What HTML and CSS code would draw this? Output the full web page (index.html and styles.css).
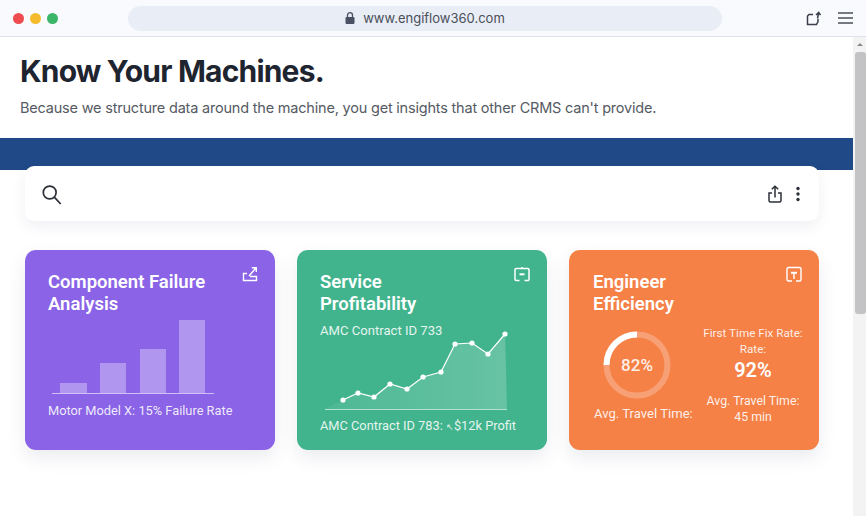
FILE: index.html
```html
<!DOCTYPE html>
<html lang="en">
<head>
  <meta charset="UTF-8">
  <meta name="viewport" content="width=device-width, initial-scale=1.0">
  <title>Know Your Machines</title>
  <link rel="stylesheet" href="styles.css">
</head>
<body>
  <header class="toolbar">
    <div class="dots">
      <span class="dot dot-red"></span>
      <span class="dot dot-yellow"></span>
      <span class="dot dot-green"></span>
    </div>
    <div class="url-bar">
      <svg class="lock" width="10" height="12" viewBox="0 0 10 12">
        <path d="M2.500 5V3.200a2.500 2.500 0 0 1 5 0V5" fill="none" stroke="#4a5162" stroke-width="1.300"/>
        <rect x="0.500" y="5" width="9" height="7" rx="1.200" fill="#4a5162"/>
      </svg>
      <span>www.engiflow360.com</span>
    </div>
    <div class="toolbar-icons">
      <svg width="15" height="15" viewBox="0 0 15 15" fill="none" stroke="#3a3f4a" stroke-width="1.500">
        <path d="M7 3.500H3L1.500 5v8.500h9l1.500-3V8"/>
        <path d="M11.500 7.500l1-5M10 4l2.700-2.500L14.500 4"/>
      </svg>
      <svg width="15" height="12" viewBox="0 0 15 12" stroke="#4a4f5a" stroke-width="1.400">
        <path d="M0 1h15M0 6h15M0 11h15"/>
      </svg>
    </div>
  </header>

  <div class="viewport">
    <main class="page">
      <section class="hero">
        <h1>Know Your Machines.</h1>
        <p>Because we structure data around the machine, you get insights that other CRMS can't provide.</p>
      </section>

      <div class="band"></div>

      <div class="search-card">
        <svg width="22" height="22" viewBox="0 0 22 22" fill="none" stroke="#2b2f38" stroke-width="1.700">
          <circle cx="7.700" cy="9.500" r="6.400"/>
          <path d="M12.300 14.100L18.700 21"/>
        </svg>
        <div class="search-actions">
          <svg width="14" height="18" viewBox="0 0 14 18" fill="none" stroke="#2b2f38" stroke-width="1.500">
            <path d="M4 8H1v7.500A1.500 1.500 0 0 0 2.500 17h9a1.500 1.500 0 0 0 1.500-1.500V8h-3"/>
            <path d="M7 12.500V1.200M3.800 4.300L7 1.200l3.200 3.100"/>
          </svg>
          <svg width="4" height="16" viewBox="0 0 4 16" fill="#2b2f38">
            <circle cx="2" cy="2.500" r="1.700"/>
            <circle cx="2" cy="8" r="1.700"/>
            <circle cx="2" cy="13.500" r="1.700"/>
          </svg>
        </div>
      </div>

      <section class="cards">
        <article class="card card-purple">
          <svg class="card-icon" width="16" height="16" viewBox="0 0 16 16" fill="none" stroke="#fff" stroke-width="1.400">
            <path d="M5 7.500H1.500V14.500H14.500V10.500H8"/>
            <path d="M7 10L13.500 2.500M9.800 1.800H14.300V6"/>
          </svg>
          <h2>Component Failure<br>Analysis</h2>
          <svg class="bars" width="250" height="78" viewBox="0 0 250 78">
            <g fill="#fff" fill-opacity="0.33">
              <rect x="35" y="65" width="27" height="10"/>
              <rect x="75" y="45" width="26" height="30"/>
              <rect x="115" y="31" width="26" height="44"/>
              <rect x="154" y="2" width="26" height="73"/>
            </g>
            <path d="M27 75.500h162" stroke="#fff" stroke-opacity="0.6"/>
          </svg>
          <p class="caption caption-bars">Motor Model X: 15% Failure Rate</p>
        </article>

        <article class="card card-green">
          <svg class="card-icon" width="16" height="16" viewBox="0 0 16 16" fill="none" stroke="#fff" stroke-width="1.500">
            <path d="M5.500 14.500H2.200A1.200 1.200 0 0 1 1 13.300V3.700A1.200 1.200 0 0 1 2.200 2.500H13.800A1.200 1.200 0 0 1 15 3.700V13.300A1.200 1.200 0 0 1 13.800 14.500H10.500"/>
            <path d="M8 1V3"/>
            <path d="M5.500 8.300H10.500" stroke-width="2"/>
          </svg>
          <h2>Service<br>Profitability</h2>
          <p class="caption contract">AMC Contract ID 733</p>
          <svg class="line-chart" width="250" height="84" viewBox="0 0 250 84">
            <defs>
              <linearGradient id="area-fade" x1="0" y1="0" x2="1" y2="0">
                <stop offset="0" stop-color="#fff" stop-opacity="0.06"/>
                <stop offset="1" stop-color="#fff" stop-opacity="0.2"/>
              </linearGradient>
            </defs>
            <path d="M28 81L46 72L61 65L77 69L93 56L110 61L126 49L144 44L158 16L175 15L191 26L208 6L210 81Z" fill="url(#area-fade)"/>
            <path d="M28 81.500H210" stroke="#fff" stroke-opacity="0.6"/>
            <path d="M46 72L61 65L77 69L93 56L110 61L126 49L144 44L158 16L175 15L191 26L208 6" fill="none" stroke="#fff" stroke-width="1.200"/>
            <g fill="#fff">
              <circle cx="46" cy="72" r="2.600"/>
              <circle cx="61" cy="65" r="2.600"/>
              <circle cx="77" cy="69" r="2.600"/>
              <circle cx="93" cy="56" r="2.600"/>
              <circle cx="110" cy="61" r="2.600"/>
              <circle cx="126" cy="49" r="2.600"/>
              <circle cx="144" cy="44" r="2.600"/>
              <circle cx="158" cy="16" r="2.600"/>
              <circle cx="175" cy="15" r="2.600"/>
              <circle cx="191" cy="26" r="2.600"/>
              <circle cx="208" cy="6" r="2.600"/>
            </g>
          </svg>
          <p class="caption caption-line">AMC Contract ID 783: <span class="arrow">↖</span>$12k Profit</p>
        </article>

        <article class="card card-orange">
          <svg class="card-icon" width="16" height="16" viewBox="0 0 16 16" fill="none" stroke="#fff" stroke-width="1.400">
            <path d="M6 15H2.500A1.500 1.500 0 0 1 1 13.500V3A1.500 1.500 0 0 1 2.500 1.500H13.500A1.500 1.500 0 0 1 15 3V13.500A1.500 1.500 0 0 1 13.500 15H10"/>
            <path d="M5 6.800H11" stroke-width="2"/>
            <path d="M8 7V13"/>
          </svg>
          <h2>Engineer<br>Efficiency</h2>
          <div class="stats">
            <div class="stats-left">
              <div class="ring">
                <svg width="68" height="68" viewBox="0 0 68 68" fill="none" stroke-width="6">
                  <circle cx="34" cy="34" r="30.500" stroke="#fff" stroke-opacity="0.25"/>
                  <path d="M3.500 34A30.500 30.500 0 0 1 34 3.500" stroke="#fff"/>
                </svg>
                <span class="ring-value">82%</span>
              </div>
              <p class="stat-label">Avg. Travel Time:</p>
            </div>
            <div class="stats-right">
              <p class="stat-small">First Time Fix Rate:<br>Rate:</p>
              <p class="stat-big">92%</p>
              <p class="stat-label">Avg. Travel Time:<br>45 min</p>
            </div>
          </div>
        </article>
      </section>
    </main>

    <aside class="scrollbar">
      <span class="scroll-arrow"></span>
      <span class="scroll-thumb"></span>
    </aside>
  </div>
</body>
</html>
```

FILE: styles.css
```css
* {
  box-sizing: border-box;
}

html, body {
  height: 100%;
}

body {
  margin: 0;
  font-family: Inter, "Liberation Sans", sans-serif;
  background-color: #fff;
  overflow: hidden;
  display: flex;
  flex-direction: column;
}

p, h1, h2 {
  margin: 0;
}

/* browser chrome */
.toolbar {
  height: 37px;
  flex-shrink: 0;
  display: flex;
  align-items: center;
  padding: 0 13px;
  background-color: #f9fafd;
  border-bottom: 1px solid #dde3ee;
}

.dots {
  width: 115px;
  display: flex;
  gap: 6px;
}

.dot {
  width: 11px;
  height: 11px;
  border-radius: 50%;
}

.dot-red { background-color: #ee4c4f; }
.dot-yellow { background-color: #f4bc2d; }
.dot-green { background-color: #3bb568; }

.url-bar {
  width: 594px;
  height: 25px;
  border-radius: 13px;
  background-color: #e9edf5;
  display: flex;
  align-items: center;
  justify-content: center;
  gap: 8px;
  font-size: 13px;
  color: #4a4f5a;
}

.toolbar-icons {
  margin-left: auto;
  display: flex;
  align-items: center;
  gap: 17px;
}

/* page area */
.viewport {
  flex: 1;
  display: flex;
  min-height: 0;
}

.page {
  flex: 1;
  min-width: 0;
}

.hero {
  height: 101px;
  padding: 15px 20px 0;
}

h1 {
  font-size: 30px;
  line-height: 38px;
  font-weight: 700;
  letter-spacing: -0.8px;
  color: #1e2530;
}

.hero p {
  margin-top: 8px;
  font-size: 14.500px;
  line-height: 20px;
  letter-spacing: -0.2px;
  color: #555a63;
}

.band {
  height: 32px;
  background-color: #1f4a87;
}

.search-card {
  height: 55px;
  margin: -4px 34px 0 25px;
  padding: 0 19px 0 17px;
  position: relative;
  display: flex;
  align-items: center;
  justify-content: space-between;
  background-color: #fff;
  border-radius: 9px;
  box-shadow: 0 6px 14px rgba(60, 80, 120, 0.08);
}

.search-actions {
  display: flex;
  align-items: center;
  gap: 14px;
}

.cards {
  margin: 29px 34px 0 25px;
  display: grid;
  grid-template-columns: repeat(3, 1fr);
  gap: 22px;
}

.card {
  height: 200px;
  position: relative;
  padding: 21px 0 0 23px;
  border-radius: 11px;
  color: #fff;
  box-shadow: 0 8px 18px rgba(60, 70, 110, 0.1);
}

.card-purple { background-color: #8a63e6; }
.card-green { background-color: #42b48d; }
.card-orange {
  padding-left: 24px;
  background-color: #f58147;
}

.card-icon {
  position: absolute;
  top: 16px;
  right: 17px;
}

h2 {
  font-family: Roboto, sans-serif;
  font-size: 18.500px;
  line-height: 22px;
  font-weight: 600;
}

.caption {
  font-family: Roboto, sans-serif;
  font-size: 12.800px;
  line-height: 18px;
  color: rgba(255, 255, 255, 0.88);
}

.arrow {
  font-size: 9px;
}

.bars, .line-chart {
  display: block;
  margin-left: -23px;
}

.bars {
  margin-top: 3px;
}

.caption-bars {
  margin-top: 6px;
}

.contract {
  margin-top: 7px;
  font-size: 13.100px;
}

.line-chart {
  margin-top: -12px;
}

.caption-line {
  margin-top: 5px;
}

.stats {
  margin-top: 7px;
  margin-left: -2px;
  display: flex;
  font-family: Roboto, sans-serif;
}

.stats-left {
  width: 110px;
  padding-top: 9px;
}

.ring {
  width: 68px;
  height: 68px;
  margin-left: 12px;
  position: relative;
}

.ring svg {
  display: block;
}

.ring-value {
  position: absolute;
  inset: 0;
  display: flex;
  align-items: center;
  justify-content: center;
  font-size: 17px;
  font-weight: 500;
  color: rgba(255, 255, 255, 0.9);
}

.stats-left .stat-label {
  margin-top: 7px;
  margin-left: 3px;
  font-size: 13.100px;
  white-space: nowrap;
}

.stats-right {
  width: 104px;
  padding-top: 3px;
  text-align: center;
  white-space: nowrap;
}

.stat-label {
  font-size: 12.300px;
  line-height: 16px;
  color: rgba(255, 255, 255, 0.9);
}

.stat-small {
  font-size: 11.700px;
  line-height: 16px;
  color: rgba(255, 255, 255, 0.88);
}

.stat-big {
  margin: 1px 0 11px;
  font-size: 20px;
  line-height: 24px;
  font-weight: 600;
}

/* scrollbar */
.scrollbar {
  width: 13px;
  flex-shrink: 0;
  padding-top: 6px;
  background-color: #f3f3f4;
  display: flex;
  flex-direction: column;
  align-items: center;
}

.scroll-arrow {
  width: 0;
  height: 0;
  border-left: 3px solid transparent;
  border-right: 3px solid transparent;
  border-bottom: 3px solid #8a8a8a;
}

.scroll-thumb {
  width: 11px;
  height: 262px;
  margin-top: 6px;
  margin-left: 2px;
  border-radius: 3px;
  background-color: #c3c3c5;
}
```
